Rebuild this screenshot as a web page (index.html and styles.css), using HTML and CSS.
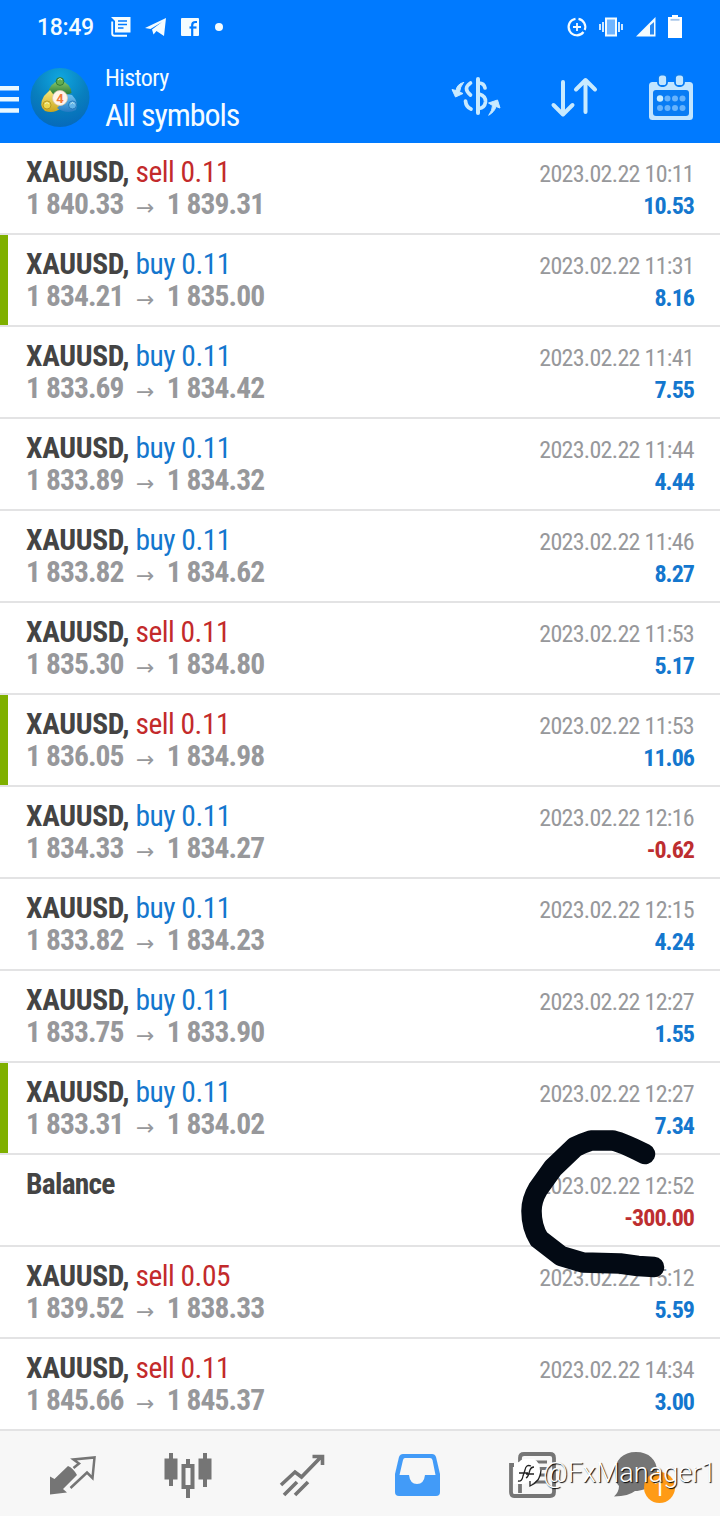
FILE: index.html
```
<!DOCTYPE html>
<html lang="en">
<head>
<meta charset="utf-8">
<title>History</title>
<link rel="stylesheet" href="styles.css">
</head>
<body>
<div class="app">
  <header class="top">
    <div class="status">
      <div class="status-left">
        <span class="clock">18:49</span>
        <svg class="s-news" width="20" height="20" viewBox="0 0 20 20"><path d="M1.200 4.500V16.500Q1.200 18.800 3.500 18.800H16" fill="none" stroke="#f4fcff" stroke-width="1.900"/><path d="M0 0H19.500V15.500H4V4Z" fill="#f4fcff"/><path d="M7 4h9M7 7.500h9M7 11h5.500" stroke="#007aff" stroke-width="1.500"/></svg>
        <svg class="s-plane" width="22" height="20" viewBox="0 0 22 20"><path d="M0 11 21 1 19 19 11.500 14 8.500 17.500 7 12.500 17 5 5.500 12Z" fill="#f4fcff"/></svg>
        <svg class="s-fb" width="18" height="18" viewBox="0 0 18 18"><rect width="18" height="18" rx="1" fill="#f4fcff"/><path d="M11.200 18V7Q11.200 4 14.500 4H16" fill="none" stroke="#007aff" stroke-width="2.200"/><path d="M8.500 9.500h7" stroke="#007aff" stroke-width="2.200"/></svg>
        <i class="dot"></i>
      </div>
      <div class="status-right">
        <svg width="20" height="20" viewBox="0 0 20 20" fill="none" stroke="#f4fcff"><path d="M8.500 1.800A8.300 8.300 0 1 0 16.500 15M11.500 1.800A8.300 8.300 0 0 1 17.700 13" stroke-width="2.200"/><path d="M10 6v8M6 10h8" stroke-width="1.800"/></svg>
        <svg class="s-vib" width="24" height="20" viewBox="0 0 24 20"><path d="M7 1.500h10v17H7Z" fill="#70b5ff" stroke="#f4fcff" stroke-width="2"/><path d="M1 7v6M4 5v10M20 5v10M23 7v6" stroke="#f4fcff" stroke-width="1.700"/></svg>
        <svg class="s-sig" width="20" height="20" viewBox="0 0 20 20"><path d="M0 19.500 19.500 0V19.500Z" fill="#f4fcff"/><path d="M14 8.500 18 5V17.500H14Z" fill="#2788f2"/></svg>
        <svg class="s-bat" width="14" height="24" viewBox="0 0 14 24"><path d="M4 0h6v2h4v21H0V2h4Z" fill="#fff"/><path d="M2.500 4.800h9" stroke="#a5c4e8" stroke-width="1.800"/></svg>
      </div>
    </div>
    <div class="toolbar">
      <svg class="burger" width="19" height="28" viewBox="0 0 19 28"><path d="M0 2.200h19M0 13.200h19M0 24.500h19" stroke="#e9f8ff" stroke-width="4.400"/></svg>
      <svg class="logo" width="60" height="60" viewBox="0 0 60 60">
        <defs>
          <radialGradient id="disc" cx=".5" cy=".18" r=".85"><stop offset="0" stop-color="#10a7e0"/><stop offset=".55" stop-color="#087fbe"/><stop offset="1" stop-color="#0668ba"/></radialGradient>
          <linearGradient id="green" x2="0" y2="1"><stop stop-color="#8cc96b"/><stop offset="1" stop-color="#1c7130"/></linearGradient>
          <linearGradient id="gold" x2="0" y2="1"><stop stop-color="#f4e87c"/><stop offset="1" stop-color="#cba51b"/></linearGradient>
          <linearGradient id="blue" x2="0" y2="1"><stop stop-color="#72c5f3"/><stop offset="1" stop-color="#247ac4"/></linearGradient>
        </defs>
        <circle cx="30" cy="30.500" r="29.500" fill="url(#disc)"/>
        <path d="M30 14Q41 16 41.500 26L34 29H26L18.500 26Q19 16 30 14Z" fill="url(#green)"/>
        <path d="M20 23 26 31 31 41Q24 47 15 44 8 39 14 29Z" fill="url(#gold)"/>
        <path d="M35 27 42 28Q49 35 46 43 37 48 27 41L33 35Z" fill="url(#blue)"/>
        <g stroke-width=".8"><circle cx="30" cy="14.500" r="3.900" fill="#63ad50" stroke="#236d30"/><circle cx="17" cy="38" r="4" fill="#ecd84f" stroke="#a88b1c"/><circle cx="42.500" cy="38" r="4" fill="#64b5e9" stroke="#1b6cae"/></g>
        <path d="M28 13q2-3 4 0M15 37q2-3 4 0M40.500 37q2-3 4 0" stroke="#f0fff0" fill="none" opacity=".7"/>
        <circle cx="30" cy="31" r="7.500" fill="#fff4ea" stroke="#dbc9ae" stroke-width=".8"/>
        <text x="30" y="35.500" text-anchor="middle" class="logo-num">4</text>
      </svg>
      <div class="titles"><div class="title">History</div><div class="subtitle">All symbols</div></div>
      <div class="actions">
        <svg width="50" height="40" viewBox="0 0 50 40" fill="none" stroke="#c8eaff" stroke-linecap="round">
          <path d="M27 2V36" stroke-width="4"/><path d="M19.500 6Q11.500 11.500 19.500 18M28 6Q33 6 34 11M28 17Q35 19 34.500 25 33.500 31 28 31.500M14.500 24Q15 30 20 32" stroke-width="3.700"/>
          <path d="M12.500 5.500Q6 7 5 13.500L1 12.500 4.500 20 12 16.500 8.500 15Q9 10 12.500 5.500ZM38 38Q43.500 35 45 29.500L49 31 46.500 23 37.500 26 41.500 28.500Q41.500 33 38 38Z" fill="#c8eaff" stroke-width="1" stroke-linejoin="round"/>
        </svg>
        <svg class="sort" width="46" height="40" viewBox="0 0 46 40" fill="none" stroke="#c8eaff" stroke-width="4" stroke-linecap="round" stroke-linejoin="round"><path d="M12 5V36M2.500 28 12 37.500 21.500 28M34.500 35V3M25 12.500 34.500 3 44 12.500"/></svg>
        <svg width="44" height="46" viewBox="0 0 44 46"><rect y="6" width="44" height="38" rx="3.500" fill="#c2e5ff"/><rect x="4" y="14" width="36" height="26" rx="3" fill="#087cf4"/><g fill="#c2e5ff" stroke="#087cf4" stroke-width="1.800"><rect x="9" y="-1.500" width="9" height="11.500" rx="3.500"/><rect x="26" y="-1.500" width="9" height="11.500" rx="3.500"/></g><g fill="#67b3fc"><circle cx="11" cy="22.500" r="3.200" fill="#c9edff"/><circle cx="18.500" cy="22.500" r="3"/><circle cx="26" cy="22.500" r="3"/><circle cx="33.500" cy="22.500" r="3"/><circle cx="11" cy="32" r="3"/><circle cx="18.500" cy="32" r="3"/><circle cx="26" cy="32" r="3"/><circle cx="33.500" cy="32" r="3"/></g></svg>
      </div>
    </div>
  </header>
  <main class="deals">
    <div class="deal"><div class="left"><div class="name"><b>XAUUSD,</b> <span class="sell">sell 0.11</span></div><div class="prices">1 840.33<span class="arrow">→</span>1 839.31</div></div><div class="right"><div class="date">2023.02.22 10:11</div><div class="profit">10.53</div></div></div>
    <div class="deal mark"><div class="left"><div class="name"><b>XAUUSD,</b> <span class="buy">buy 0.11</span></div><div class="prices">1 834.21<span class="arrow">→</span>1 835.00</div></div><div class="right"><div class="date">2023.02.22 11:31</div><div class="profit">8.16</div></div></div>
    <div class="deal"><div class="left"><div class="name"><b>XAUUSD,</b> <span class="buy">buy 0.11</span></div><div class="prices">1 833.69<span class="arrow">→</span>1 834.42</div></div><div class="right"><div class="date">2023.02.22 11:41</div><div class="profit">7.55</div></div></div>
    <div class="deal"><div class="left"><div class="name"><b>XAUUSD,</b> <span class="buy">buy 0.11</span></div><div class="prices">1 833.89<span class="arrow">→</span>1 834.32</div></div><div class="right"><div class="date">2023.02.22 11:44</div><div class="profit">4.44</div></div></div>
    <div class="deal"><div class="left"><div class="name"><b>XAUUSD,</b> <span class="buy">buy 0.11</span></div><div class="prices">1 833.82<span class="arrow">→</span>1 834.62</div></div><div class="right"><div class="date">2023.02.22 11:46</div><div class="profit">8.27</div></div></div>
    <div class="deal"><div class="left"><div class="name"><b>XAUUSD,</b> <span class="sell">sell 0.11</span></div><div class="prices">1 835.30<span class="arrow">→</span>1 834.80</div></div><div class="right"><div class="date">2023.02.22 11:53</div><div class="profit">5.17</div></div></div>
    <div class="deal mark"><div class="left"><div class="name"><b>XAUUSD,</b> <span class="sell">sell 0.11</span></div><div class="prices">1 836.05<span class="arrow">→</span>1 834.98</div></div><div class="right"><div class="date">2023.02.22 11:53</div><div class="profit">11.06</div></div></div>
    <div class="deal"><div class="left"><div class="name"><b>XAUUSD,</b> <span class="buy">buy 0.11</span></div><div class="prices">1 834.33<span class="arrow">→</span>1 834.27</div></div><div class="right"><div class="date">2023.02.22 12:16</div><div class="profit loss">-0.62</div></div></div>
    <div class="deal"><div class="left"><div class="name"><b>XAUUSD,</b> <span class="buy">buy 0.11</span></div><div class="prices">1 833.82<span class="arrow">→</span>1 834.23</div></div><div class="right"><div class="date">2023.02.22 12:15</div><div class="profit">4.24</div></div></div>
    <div class="deal"><div class="left"><div class="name"><b>XAUUSD,</b> <span class="buy">buy 0.11</span></div><div class="prices">1 833.75<span class="arrow">→</span>1 833.90</div></div><div class="right"><div class="date">2023.02.22 12:27</div><div class="profit">1.55</div></div></div>
    <div class="deal mark"><div class="left"><div class="name"><b>XAUUSD,</b> <span class="buy">buy 0.11</span></div><div class="prices">1 833.31<span class="arrow">→</span>1 834.02</div></div><div class="right"><div class="date">2023.02.22 12:27</div><div class="profit">7.34</div></div></div>
    <div class="deal"><div class="left"><div class="name balance"><b>Balance</b></div></div><div class="right"><div class="date">2023.02.22 12:52</div><div class="profit loss">-300.00</div></div>
      <svg class="scribble" width="160" height="160" viewBox="0 0 160 160"><path d="M130 29Q104 16 97 15.500H76Q68 18 60 22L38 43 23 64Q16.500 75 16.500 86 16.500 102 24 114L46 131 68 137.500 105 138.500 123 141 139 142" fill="none" stroke="#030a14" stroke-width="20.500" stroke-linecap="round" stroke-linejoin="round"/></svg>
    </div>
    <div class="deal"><div class="left"><div class="name"><b>XAUUSD,</b> <span class="sell">sell 0.05</span></div><div class="prices">1 839.52<span class="arrow">→</span>1 838.33</div></div><div class="right"><div class="date">2023.02.22 15:12</div><div class="profit">5.59</div></div></div>
    <div class="deal"><div class="left"><div class="name"><b>XAUUSD,</b> <span class="sell">sell 0.11</span></div><div class="prices">1 845.66<span class="arrow">→</span>1 845.37</div></div><div class="right"><div class="date">2023.02.22 14:34</div><div class="profit">3.00</div></div></div>
  </main>
  <nav class="tabs">
    <svg width="48" height="48" viewBox="0 0 48 48"><path d="M2 21.500 6.500 24 20 11Q25 13 29 20L15 34 19 37.500 2 39.500Z" fill="#757575"/><path d="M25.500 13 31 8.500 25.500 4.500 46.500 2.500 44.500 23 39 17.500 22.500 33" fill="none" stroke="#757575" stroke-width="2.500"/></svg>
    <svg width="48" height="48" viewBox="0 0 48 48"><path d="M8 -2V31M42 -2V32M25 4v7M25 33v10" stroke="#757575" stroke-width="4"/><path d="M1.500 3.500h13v21h-13ZM35.500 3.500h13v21H35.500Z" fill="#757575"/><path d="M20.500 11h9v21h-9Z" fill="none" stroke="#757575" stroke-width="4"/></svg>
    <svg width="48" height="48" viewBox="0 0 48 48" fill="none" stroke="#757575" stroke-width="3.600"><path d="M3 30 17 17 23.500 22 43 2M34.500 1.500H44.500V10M6 40 19 27M17 40 30 27"/></svg>
    <svg width="48" height="48" viewBox="0 0 48 48"><path d="M10-1H39Q42-1 43 2L47 19V37Q47 41 43 41H6Q2 41 2 37V19L6 2Q7-1 10-1Z" fill="#429bf8"/><path d="M12 3H37Q39 3 39.500 5L42.500 20H32Q31 29 24 29T16 20H6.500L10 5Q10.500 3 12 3Z" fill="#f7f7f7"/></svg>
    <svg width="48" height="48" viewBox="0 0 48 48"><path d="M12 38V3Q12-1 16-1H42Q46-1 46 3V37Q46 41 42 41H6Q3 41 3 37V10H12" fill="none" stroke="#757575" stroke-width="3.800"/><path d="M17 7H39M22 13.500H39M27 20H39M22 27H39" stroke="#757575" stroke-width="2.800"/></svg>
    <div class="chat"><svg width="48" height="48" viewBox="0 0 48 48"><path d="M23-3C36-3 44 5 44 16S35 36 22 36Q16 41 1 41.500 6 37 6 31 2 27 2 17C2 5 10-3 23-3Z" fill="#757575"/></svg><span class="badge">1</span></div>
    <div class="watermark"><svg width="28" height="32" viewBox="0 0 28 32"><path d="M5 3Q7 0 12 0H20Q26 3 26 12T16 26V22L10 25H0V4Z" fill="#fff"/><path d="M27 11Q27 22 16 27V22M4 22Q8 23 9 17L11 11Q12 5 17 7M5 14h9M12 19Q14 18 15 14L16 11Q17 8 20 8M12 15H20" fill="none" stroke="#222" stroke-width="1.300"/></svg><span>@FxManager1</span></div>
  </nav>
</div>
</body>
</html>
```
FILE: styles.css
```
* { box-sizing: border-box; }
body { margin: 0; background: #fff; font-family: "Roboto Condensed", Roboto, sans-serif; }
svg { display: block; flex: none; overflow: visible; }
.app { width: 720px; height: 1516px; display: flex; flex-direction: column; overflow: hidden; }

.top { height: 143px; background: #007aff; color: #f4fcff; }
.status { height: 54px; padding: 0 37px; display: flex; justify-content: space-between; align-items: center; }
.status-left, .status-right { display: flex; align-items: center; }
.clock { font: 500 23px/28px Roboto, sans-serif; letter-spacing: -.3px; width: 74px; padding-top: 1px; }
.s-plane { margin-left: 14px; }
.s-fb { margin-left: 14px; }
.dot { width: 8px; height: 8px; margin-left: 16px; border-radius: 50%; background: #f4fcff; }
.s-vib { margin-left: 12px; }
.s-sig { margin-left: 13px; }
.s-bat { margin-left: 12px; margin-right: 1px; }
.toolbar { height: 89px; display: flex; }
.burger { margin-top: 32px; }
.logo { margin: 13px 0 0 11px; }
.logo-num { font: 700 13px Roboto, sans-serif; fill: #f07838; }
.titles { margin: 8px 0 0 15px; }
.title { font-size: 24px; line-height: 32px; letter-spacing: -.6px; }
.subtitle { font-size: 32px; line-height: 43px; letter-spacing: -1.1px; }
.actions { display: flex; margin: 22px 27px 0 auto; align-items: flex-start; }
.actions svg:first-child { margin-top: 1px; }
.sort { margin: 1px 52px 0 50px; }

.deals { flex: none; }
.deal { position: relative; height: 92px; display: flex; justify-content: space-between; padding: 0 26px; border-bottom: 2px solid #e3e3e4; line-height: 32px; }
.mark::before { content: ""; width: 8px; margin: 0 18px 0 -26px; background: #7fb000; }
.mark .left { margin-right: auto; }
.left { padding-top: 13px; }
.right { padding-top: 15px; text-align: right; }
.name, .prices { height: 32px; white-space: nowrap; font-size: 29.500px; }
.name { color: #444; letter-spacing: -.5px; }
.name b { letter-spacing: -.35px; }
.name.balance b { letter-spacing: -.75px; }
.sell { color: #c32a2b; }
.buy { color: #1477ce; }
.prices { font-weight: 700; color: #97989b; letter-spacing: -.9px; }
.arrow { display: inline-block; width: 43px; text-align: center; font: 400 22px/20px "DejaVu Sans", sans-serif; letter-spacing: 0; vertical-align: -1px; }
.date { font-size: 24px; color: #97989b; letter-spacing: -.7px; }
.profit { font-size: 24px; font-weight: 700; color: #1477ce; letter-spacing: -.95px; }
.loss { color: #bd2e30; }
.scribble { position: absolute; left: 515px; top: -30px; z-index: 1; }

.tabs { position: relative; height: 85px; background: #f7f7f7; display: flex; gap: 67px; padding: 24px 0 0 48px; }
.chat { position: relative; margin-left: -10px; }
.badge { position: absolute; left: 31px; top: 17px; width: 31px; height: 31px; border-radius: 50%; background: #ff9b16; color: #fff; font: 22px/33px Roboto, sans-serif; text-align: center; }
.watermark { position: absolute; left: 514px; top: 28px; display: flex; color: #fff; font: 300 27px/28px Roboto, sans-serif; text-shadow: 1px 1px 1px #000; white-space: nowrap; }
.watermark span { margin-left: 1px; }
```
